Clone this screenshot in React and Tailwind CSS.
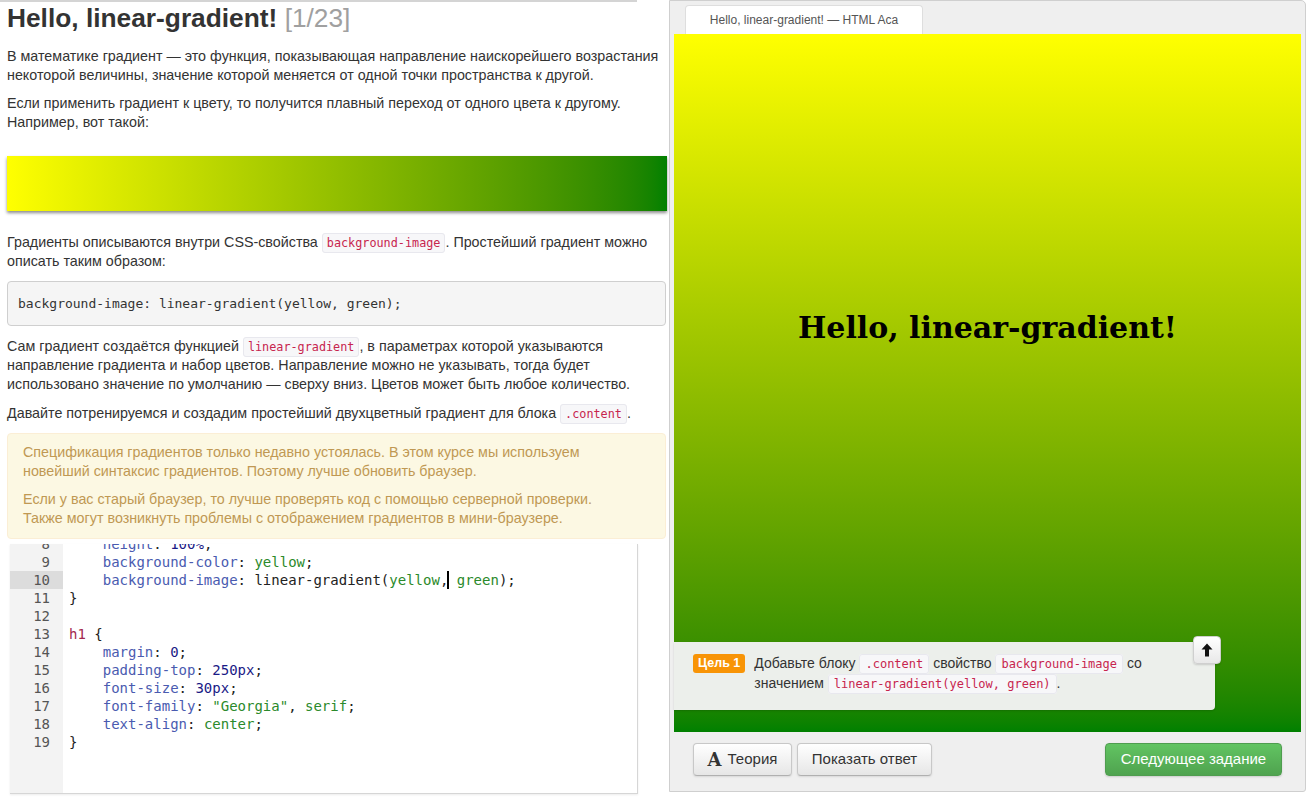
import React from "react";

const SANS = { fontFamily: '"Liberation Sans", Arial, sans-serif' };
const MONO = { fontFamily: '"DejaVu Sans Mono", "Liberation Mono", monospace' };

function C({ children, small }) {
  return (
    <code
      style={MONO}
      className={
        "rounded-[3px] border border-[#e8e8ee] bg-[#f7f7f9] py-[2px] leading-none text-[#c7254e] " +
        (small ? "px-[5px] text-[12px]" : "px-[4px] text-[11.8px]")
      }
    >
      {children}
    </code>
  );
}

const P = "text-[#4a5bb0]";
const V = "text-[#2b8a2b]";
const N = "text-[#1a1a86]";
const T = "text-[#a3284f]";

const lines = [
  { n: 8, c: [["    height", P], [": ", ""], ["100%", N], [";", ""]] },
  { n: 9, c: [["    background-color", P], [": ", ""], ["yellow", V], [";", ""]] },
  { n: 10, hl: true, c: [["    background-image", P], [": linear-gradient(", ""], ["yellow", V], [",", ""], ["|", "cursor"], [" ", ""], ["green", V], [");", ""]] },
  { n: 11, c: [["}", ""]] },
  { n: 12, c: [] },
  { n: 13, c: [["h1", T], [" {", ""]] },
  { n: 14, c: [["    margin", P], [": ", ""], ["0", N], [";", ""]] },
  { n: 15, c: [["    padding-top", P], [": ", ""], ["250px", N], [";", ""]] },
  { n: 16, c: [["    font-size", P], [": ", ""], ["30px", N], [";", ""]] },
  { n: 17, c: [["    font-family", P], [": ", ""], ['"Georgia"', V], [", ", ""], ["serif", V], [";", ""]] },
  { n: 18, c: [["    text-align", P], [": ", ""], ["center", V], [";", ""]] },
  { n: 19, c: [["}", ""]] },
];

function Btn({ children, className = "" }) {
  return (
    <button
      style={SANS}
      className={
        "flex h-[33px] items-center justify-center rounded-[4px] border border-[#c8c8c8] border-b-[#b0b0b0] bg-gradient-to-b from-white to-[#e6e6e6] text-[15px] text-[#333] shadow-[inset_0_1px_0_rgba(255,255,255,0.2),0_1px_2px_rgba(0,0,0,0.1)] " +
        className
      }
    >
      {children}
    </button>
  );
}

export default function App() {
  return (
    <div className="flex h-[801px] w-[1308px] overflow-hidden bg-white" style={SANS}>
      {/* LEFT */}
      <div className="flex w-[669px] shrink-0 flex-col text-[14.3px] leading-[19px] text-[#333]">
        <div className="h-[2px] w-[637px] bg-[#d4d4d4]" />
        <div className="pl-[7px] pr-[2px]">
          <h1 className="mt-[1px] mb-[14px] h-[30px] whitespace-nowrap text-[26.3px] font-bold leading-[30px] text-[#333]">
            Hello, linear-gradient! <span className="font-normal text-[#a0a0a0]">[1/23]</span>
          </h1>
          <p className="mb-[9px] whitespace-nowrap">
            В математике градиент — это функция, показывающая направление наискорейшего возрастания
            <br />
            некоторой величины, значение которой меняется от одной точки пространства к другой.
          </p>
          <p className="whitespace-nowrap">
            Если применить градиент к цвету, то получится плавный переход от одного цвета к другому.
            <br />
            Например, вот такой:
          </p>
          <div className="mt-[24px] h-[55px] w-[660px] bg-gradient-to-r from-[#ffff00] to-[#008000] shadow-[0_2px_3px_rgba(0,0,0,0.45)]" />
          <p className="mt-[22px] mb-[10px] whitespace-nowrap">
            Градиенты описываются внутри CSS-свойства <C>background-image</C>. Простейший градиент можно
            <br />
            описать таким образом:
          </p>
          <pre
            style={MONO}
            className="flex h-[45px] w-[659px] items-center rounded-[4px] border border-[#cfcfcf] bg-[#f5f5f5] px-[10px] text-[13px] text-[#333]"
          >
            background-image: linear-gradient(yellow, green);
          </pre>
          <p className="mt-[11px] mb-[10px] whitespace-nowrap">
            Сам градиент создаётся функцией <C>linear-gradient</C>, в параметрах которой указываются
            <br />
            направление градиента и набор цветов. Направление можно не указывать, тогда будет
            <br />
            использовано значение по умолчанию — сверху вниз. Цветов может быть любое количество.
          </p>
          <p className="mb-[10px] whitespace-nowrap">
            Давайте потренируемся и создадим простейший двухцветный градиент для блока <C>.content</C>.
          </p>
          <div className="w-[659px] whitespace-nowrap rounded-[4px] border border-[#fbeed5] bg-[#fcf8e3] px-[15px] pt-[9px] pb-[10px] text-[#c09853]">
            <p className="mb-[9px]">
              Спецификация градиентов только недавно устоялась. В этом курсе мы используем
              <br />
              новейший синтаксис градиентов. Поэтому лучше обновить браузер.
            </p>
            <p>
              Если у вас старый браузер, то лучше проверять код с помощью серверной проверки.
              <br />
              Также могут возникнуть проблемы с отображением градиентов в мини-браузере.
            </p>
          </div>
          {/* editor */}
          <div className="ml-[3px] mt-[5px] flex h-[250px] w-[628px] overflow-hidden border-r border-b border-[#d6d6d6] shadow-[0_1px_2px_rgba(0,0,0,0.08)]">
            <div style={MONO} className="flex w-full text-[14px] leading-[18px]">
              <div className="flex w-[53px] shrink-0 flex-col bg-[#f3f3f3] text-[#555]">
                <div className="-mt-[9px]">
                  {lines.map((l) => (
                    <div key={l.n} className={"h-[18px] pr-[13px] text-right " + (l.hl ? "bg-[#dcdcdc]" : "")}>
                      {l.n}
                    </div>
                  ))}
                </div>
              </div>
              <div className="-mt-[9px] flex-1 pl-[6px] text-[#222]">
                {lines.map((l) => (
                  <div key={l.n} className="h-[18px] whitespace-pre">
                    {l.c.map(([t, cls], i) =>
                      cls === "cursor" ? (
                        <span key={i} className="relative inline-block h-[18px] w-0 align-top">
                          <span className="absolute left-[-1px] top-0 h-[18px] w-[2px] bg-black" />
                        </span>
                      ) : (
                        <span key={i} className={cls}>
                          {t}
                        </span>
                      )
                    )}
                  </div>
                ))}
              </div>
            </div>
          </div>
        </div>
      </div>

      {/* RIGHT */}
      <div className="mb-[9px] flex w-[637px] shrink-0 flex-col rounded-tr-[5px] rounded-br-[3px] border border-[#cfcfcf] bg-[#efefef] px-[4px]">
        <div className="flex h-[33px] items-end pl-[11px]">
          <div className="flex h-[29px] w-[238px] items-center justify-center rounded-t-[4px] border border-b-0 border-[#dedede] bg-white text-[12px] text-[#555]">
            Hello, linear-gradient! — HTML Aca
          </div>
        </div>
        <div className="relative h-[698px] w-[627px] bg-gradient-to-b from-[#ffff00] to-[#008000]">
          <h2
            className="pt-[276px] text-center text-[30px] font-bold leading-[36px] text-black"
            style={{ fontFamily: '"DejaVu Serif", Georgia, serif' }}
          >
            Hello, linear-gradient!
          </h2>
          <div className="absolute bottom-[22px] left-0 flex h-[68px] w-[541px] items-start gap-[9px] rounded-r-[4px] bg-[#ecefeb] pl-[19px] pt-[11px] shadow-[0_1px_2px_rgba(0,0,0,0.15)]">
            <span className="mt-[1px] flex h-[19px] shrink-0 items-center rounded-[3px] bg-[#f89406] px-[5px] text-[12.5px] font-bold text-white">
              Цель 1
            </span>
            <div className="w-[420px] text-[14px] leading-[20px] text-[#333]">
              Добавьте блоку <C small>.content</C> свойство <C small>background-image</C> со
              <br />
              значением <C small>linear-gradient(yellow, green)</C>.
            </div>
          </div>
          <button className="absolute left-[519px] top-[602px] flex h-[28px] w-[28px] items-center justify-center rounded-[4px] border border-[#cfcfcf] bg-gradient-to-b from-white to-[#e8e8e8] shadow-[0_1px_2px_rgba(0,0,0,0.15)]">
            <svg width="12" height="14" viewBox="0 0 12 14">
              <path d="M6 0.5 L11.5 6.5 L8 6.5 L8 13.5 L4 13.5 L4 6.5 L0.5 6.5 Z" fill="#111" />
            </svg>
          </button>
        </div>
        <div className="flex flex-1 items-start justify-between px-[19px] pt-[11px]">
          <div className="flex gap-[5px]">
            <Btn className="w-[99px] gap-[6px]">
              <span className="text-[18px] font-bold leading-none text-[#333]" style={{ fontFamily: '"DejaVu Serif", serif' }}>
                A
              </span>
              <span>Теория</span>
            </Btn>
            <Btn className="w-[135px]">Показать ответ</Btn>
          </div>
          <button className="flex h-[33px] w-[177px] items-center justify-center rounded-[4px] border border-[#4f9d4f] bg-gradient-to-b from-[#62c462] to-[#4fa34f] text-[15px] text-white shadow-[0_1px_2px_rgba(0,0,0,0.15)]">
            Следующее задание
          </button>
        </div>
      </div>
    </div>
  );
}
